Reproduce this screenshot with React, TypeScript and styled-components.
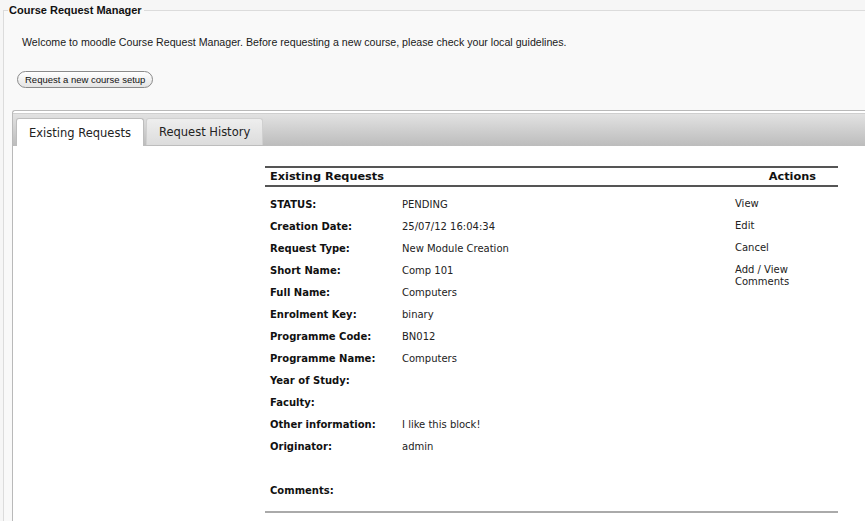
import React from 'react';
import styled, { createGlobalStyle } from 'styled-components';

const GlobalStyle = createGlobalStyle`
  html, body {
    margin: 0;
    padding: 0;
    background: #f6f6f6;
  }
  body {
    font-family: "Liberation Sans", Arial, sans-serif;
    color: #222;
    overflow: hidden;
  }
`;

const Page = styled.div`
  width: 865px;
  height: 521px;
  overflow: hidden;
  padding-top: 4px;
  box-sizing: border-box;
`;

const Fieldset = styled.fieldset`
  margin: 0 -40px 0 3px;
  padding: 0 0 0 8px;
  border: 1px solid #dcdcdc;
  border-right: none;
  background: #f9f9f9;
  min-height: 600px;
`;

const Legend = styled.legend`
  font-weight: bold;
  font-size: 11px;
  color: #111;
  padding: 0 2px 0 1px;
  margin-left: -4px;
`;

const Intro = styled.p`
  margin: 20px 0 0 10px;
  font-size: 10.65px;
  color: #1a1a1a;
`;

const SetupButton = styled.button`
  margin: 23px 0 0 5px;
  height: 17px;
  padding: 0 7px;
  border: 1px solid #8a8a8a;
  border-radius: 9px;
  background: linear-gradient(#ffffff, #e4e4e4);
  font-family: "Liberation Sans", Arial, sans-serif;
  font-size: 9.5px;
  color: #111;
  line-height: 14px;
`;

const TabPanel = styled.div`
  margin: 22px 0 0 0;
  border: 1px solid #b9b9b9;
  border-right: none;
  border-radius: 3px 0 0 0;
  padding-top: 2px;
  background: #fff;
`;

const TabStrip = styled.div`
  display: flex;
  align-items: flex-end;
  gap: 2px;
  height: 32px;
  padding-left: 3px;
  border-top: 1px solid #cfcfcf;
  background: linear-gradient(#e2e2e2, #bcbcbc);
`;

const Tab = styled.div<{ active?: boolean }>`
  height: ${p => (p.active ? 28 : 27)}px;
  margin-bottom: ${p => (p.active ? 0 : 1)}px;
  box-sizing: border-box;
  padding: 0 12px;
  display: flex;
  align-items: center;
  font-family: "DejaVu Sans", Verdana, sans-serif;
  font-size: 11.5px;
  color: #222;
  border: 1px solid ${p => (p.active ? '#bdbdbd' : '#d0d0d0')};
  border-bottom: none;
  border-radius: 3px 3px 0 0;
  background: ${p => (p.active ? '#fff' : 'linear-gradient(#eeeeee, #dcdcdc)')};
`;

const TabBody = styled.div`
  padding: 20px 0 0 252px;
  min-height: 400px;
`;

const Table = styled.div`
  width: 573px;
  font-family: "DejaVu Sans", Verdana, sans-serif;
`;

const HeaderRow = styled.div`
  display: flex;
  justify-content: space-between;
  border-top: 2px solid #555;
  border-bottom: 2px solid #555;
  padding: 1px 22px 1px 5px;
  font-size: 11.3px;
  font-weight: bold;
  color: #111;
  line-height: 15px;
`;

const Body = styled.div`
  display: grid;
  grid-template-columns: 1fr 103px;
  padding: 11px 0 0 5px;
`;

const Fields = styled.div`
  display: grid;
  grid-template-columns: 132px 1fr;
  grid-auto-rows: 22px;
  font-size: 10px;
  line-height: 14px;
`;

const Label = styled.div`
  font-weight: bold;
  color: #111;
`;

const Value = styled.div`
  color: #222;
`;

const Actions = styled.div`
  display: flex;
  flex-direction: column;
  font-size: 10px;
  line-height: 12px;
  color: #222;
`;

const Action = styled.div`
  min-height: 22px;
  max-width: 60px;
`;

const CommentsLabel = styled(Label)`
  font-size: 10px;
  margin: 22px 0 0 5px;
  line-height: 14px;
`;

const BottomRule = styled.div`
  margin-top: 13px;
  border-top: 2px solid #aaa;
`;

const fields: [string, string][] = [
  ['STATUS:', 'PENDING'],
  ['Creation Date:', '25/07/12 16:04:34'],
  ['Request Type:', 'New Module Creation'],
  ['Short Name:', 'Comp 101'],
  ['Full Name:', 'Computers'],
  ['Enrolment Key:', 'binary'],
  ['Programme Code:', 'BN012'],
  ['Programme Name:', 'Computers'],
  ['Year of Study:', ''],
  ['Faculty:', ''],
  ['Other information:', 'I like this block!'],
  ['Originator:', 'admin'],
];

const actions = ['View', 'Edit', 'Cancel', 'Add / View Comments'];

export default function App() {
  return (
    <>
      <GlobalStyle />
      <Page>
        <Fieldset>
          <Legend>Course Request Manager</Legend>
          <Intro>
            Welcome to moodle Course Request Manager. Before requesting a new course, please check your local guidelines.
          </Intro>
          <SetupButton>Request a new course setup</SetupButton>
          <TabPanel>
            <TabStrip>
              <Tab active>Existing Requests</Tab>
              <Tab>Request History</Tab>
            </TabStrip>
            <TabBody>
              <Table>
                <HeaderRow>
                  <span>Existing Requests</span>
                  <span>Actions</span>
                </HeaderRow>
                <Body>
                  <Fields>
                    {fields.map(([label, value]) => (
                      <React.Fragment key={label}>
                        <Label>{label}</Label>
                        <Value>{value}</Value>
                      </React.Fragment>
                    ))}
                  </Fields>
                  <Actions>
                    {actions.map(a => (
                      <Action key={a}>{a}</Action>
                    ))}
                  </Actions>
                </Body>
                <CommentsLabel>Comments:</CommentsLabel>
                <BottomRule />
              </Table>
            </TabBody>
          </TabPanel>
        </Fieldset>
      </Page>
    </>
  );
}
